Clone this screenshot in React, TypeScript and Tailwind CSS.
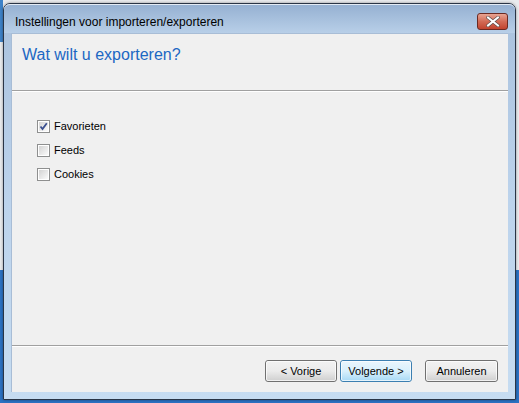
import React from "react";

const font = { fontFamily: '"Segoe UI", "Liberation Sans", Arial, sans-serif' };

function Checkbox({ label, checked }: { label: string; checked?: boolean }) {
  return (
    <div className="flex items-center h-[13px] gap-[4px]">
      <div className="w-[13px] h-[13px] border border-[#8e8f8f] bg-white p-[1px] shrink-0">
        <div className="w-full h-full bg-gradient-to-br from-[#d3d3d3] to-[#fbfbfb] flex items-center justify-center">
          {checked && (
            <svg width="9" height="9" viewBox="0 0 9 9">
              <path d="M1.5 4.5 L3.5 7 L7.8 1.2" fill="none" stroke="#3a4f8f" strokeWidth="1.8" />
            </svg>
          )}
        </div>
      </div>
      <span className="text-[11px] text-black leading-none">{label}</span>
    </div>
  );
}

function Button({ label, primary }: { label: string; primary?: boolean }) {
  return (
    <div
      className={
        "h-[22px] rounded-[3px] border flex items-center justify-center text-[11px] text-black " +
        (primary
          ? "border-[#3c7fb1] bg-gradient-to-b from-[#eaf6fd] via-[#d9f0fc] to-[#a7d9f5]"
          : "border-[#707070] bg-gradient-to-b from-[#f2f2f2] via-[#ebebeb] to-[#cfcfcf]")
      }
    >
      <div className="w-full h-full rounded-[2px] border border-white/70 flex items-center justify-center">{label}</div>
    </div>
  );
}

export default function App() {
  return (
    <div className="relative w-[519px] h-[403px] overflow-hidden bg-[#2b72c3]" style={font}>
      <div className="h-[270px] bg-[#e9ebee] flex flex-col">
        <div className="w-[3px] h-[42px] bg-[#3d82c8]" />
      </div>
      <div className="absolute left-[3px] top-[3px] w-[513px] h-[397px] border border-[#2a3546] rounded-t-[7px] rounded-b-[1px] bg-gradient-to-b from-[#a9c1dd] via-[#bcd3ec] to-[#c6dcf1] flex flex-col shadow-[0_0_3px_rgba(0,0,0,0.4)]">
        <div className="h-[29px] shrink-0 rounded-t-[6px] border-t border-[#e3ebf5] bg-gradient-to-b from-[#96b1d2] to-[#b8cfe8] flex items-start justify-between pl-[11px] pr-[7px]">
          <span className="text-[12px] text-black mt-[11px] leading-none">Instellingen voor importeren/exporteren</span>
          <div className="mt-[8px] w-[31px] h-[17px] rounded-[3px] border border-[#6b2a22] bg-gradient-to-b from-[#e8a493] via-[#d26a55] to-[#c2432e] flex items-center justify-center">
            <svg width="14" height="11" viewBox="0 0 14 11">
              <path d="M2 1.5 L12 9.5 M12 1.5 L2 9.5" stroke="#5a4a48" strokeWidth="3.4" strokeLinecap="square" />
              <path d="M2 1.5 L12 9.5 M12 1.5 L2 9.5" stroke="#ffffff" strokeWidth="2" strokeLinecap="square" />
            </svg>
          </div>
        </div>
        <div className="mx-[7px] h-[359px] bg-[#f0f0f0] flex flex-col border-l border-t border-[#a8bdd6]">
          <div className="h-[56px] shrink-0 pl-[10px] pt-[9px]">
            <span className="text-[16px] text-[#1c67c3] leading-none">Wat wilt u exporteren?</span>
          </div>
          <div className="h-[1px] bg-[#a0a0a0]" />
          <div className="h-[1px] bg-white" />
          <div className="flex-1 flex flex-col gap-[11px] pl-[25px] pt-[28px]">
            <Checkbox label="Favorieten" checked />
            <Checkbox label="Feeds" />
            <Checkbox label="Cookies" />
          </div>
          <div className="h-[1px] bg-[#a0a0a0]" />
          <div className="h-[1px] bg-white" />
          <div className="h-[45px] shrink-0 flex justify-end items-start pt-[13px] pr-[10px]">
            <div className="w-[72px]"><Button label="< Vorige" /></div>
            <div className="w-[72px] ml-[3px]"><Button label="Volgende >" primary /></div>
            <div className="w-[73px] ml-[13px]"><Button label="Annuleren" /></div>
          </div>
        </div>
      </div>
    </div>
  );
}
